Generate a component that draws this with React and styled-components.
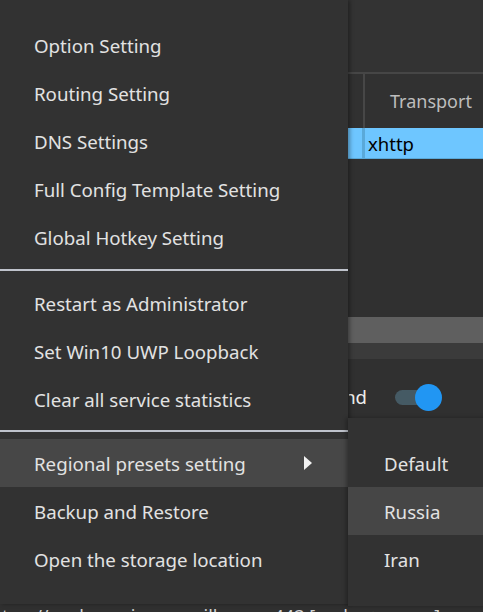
import styled, { createGlobalStyle } from "styled-components";

const GlobalStyle = createGlobalStyle`
  html, body {
    margin: 0;
    padding: 0;
    background: #303030;
  }
  body {
    font-family: "Noto Sans", "Open Sans", sans-serif;
  }
`;

const mainItems = [
    ["Option Setting", "Routing Setting", "DNS Settings", "Full Config Template Setting", "Global Hotkey Setting"],
    ["Restart as Administrator", "Set Win10 UWP Loopback", "Clear all service statistics"],
    ["Regional presets setting", "Backup and Restore", "Open the storage location"],
];

const regions = ["Default", "Russia", "Iran"];

export default () => {
    return <Page>
        <GlobalStyle />

        {/* the window behind the menu */}
        <Toolbar />
        <Header>
            <HeadCell />
            <HeadTitle>Transport</HeadTitle>
        </Header>
        <SelectedRow>
            <RowCell />
            <RowText>xhttp</RowText>
        </SelectedRow>
        <Spacer />
        <GrayBar />
        <Strip />
        <ToggleRow>
            <ToggleLabel><span>Background</span></ToggleLabel>
            <Toggle>
                <Knob />
            </Toggle>
        </ToggleRow>
        <LogLine>tog //push.services.mozilla.com:443 [socks -&gt; proxy]</LogLine>

        {/* context menu */}
        <Menu>
            {mainItems.map((group, gi) => <div key={gi}>
                {gi > 0 && <Separator $gap={gi === 1 ? 8 : 7} />}
                {group.map(label => {
                    const hasSub = label === "Regional presets setting"
                    return <Item key={label} $active={hasSub}>
                        {label}
                        {hasSub && <Arrow />}
                    </Item>
                })}
            </div>)}
        </Menu>

        <SubMenu>
            {regions.map(name => <SubItem key={name} $active={name === "Russia"}>{name}</SubItem>)}
        </SubMenu>
    </Page>
}

const Page = styled.div`
  position: relative;
  width: 483px;
  height: 612px;
  overflow: hidden;
  background: #303030;
  display: flex;
  flex-direction: column;
`;

const Toolbar = styled.div`
  height: 72px;
  flex-shrink: 0;
  background: #333333;
  border-bottom: 2px solid #464646;
`;

const Header = styled.div`
  height: 54px;
  flex-shrink: 0;
  display: flex;
  background: #313131;
`;

const HeadCell = styled.div`
  width: 363px;
  flex-shrink: 0;
  border-right: 2px solid #474747;
`;

const HeadTitle = styled.div`
  flex: 1;
  display: flex;
  align-items: center;
  padding-left: 25px;
  font-size: 18px;
  color: #bdbdbd;
`;

const SelectedRow = styled.div`
  height: 31px;
  flex-shrink: 0;
  display: flex;
  background: #6ec6ff;
  border-bottom: 1px solid #5aa9d9;
  box-sizing: border-box;
`;

const RowCell = styled.div`
  width: 362px;
  flex-shrink: 0;
  border-right: 3px solid #5aa9d9;
`;

const RowText = styled.div`
  display: flex;
  align-items: center;
  padding-left: 3px;
  font-size: 18.5px;
  color: #000000;
`;

const Spacer = styled.div`
  height: 158px;
  flex-shrink: 0;
`;

const GrayBar = styled.div`
  height: 26px;
  flex-shrink: 0;
  background: #5f5f5f;
`;

const Strip = styled.div`
  height: 16px;
  flex-shrink: 0;
  background: #3b3b3b;
`;

const ToggleRow = styled.div`
  height: 76px;
  flex-shrink: 0;
  display: flex;
  align-items: center;
  justify-content: flex-end;
  padding-right: 42px;
  gap: 28px;
  color: #eeeeee;
  font-size: 18.5px;
`;

/* only the tail of the label peeks out from under the menu */
const ToggleLabel = styled.span`
  width: 18px;
  overflow: hidden;
  display: flex;
  justify-content: flex-end;
  white-space: nowrap;
  margin-top: -2px;
`;

const Toggle = styled.div`
  position: relative;
  width: 46px;
  height: 15px;
  border-radius: 8px;
  background: #455a64;
`;

const Knob = styled.div`
  position: absolute;
  right: -1px;
  top: -6px;
  width: 27px;
  height: 27px;
  border-radius: 50%;
  background: #2196f3;
`;

const LogLine = styled.div`
  margin-top: auto;
  margin-bottom: -15px;
  padding-left: 2px;
  font-size: 18px;
  line-height: 22px;
  color: #d0d0d0;
  white-space: nowrap;
`;

const Menu = styled.div`
  position: absolute;
  left: 0;
  top: 0;
  width: 348px;
  box-sizing: border-box;
  padding: 21px 0 21px;
  background: #323232;
  box-shadow: 2px 0 4px rgba(0, 0, 0, 0.35);
  z-index: 2;
`;

const Item = styled.div`
  position: relative;
  height: 48px;
  display: flex;
  align-items: center;
  padding-left: 34px;
  font-size: 18.7px;
  color: #e2e2e2;
  background: ${p => p.$active ? "#474747" : "transparent"};
`;

const Arrow = styled.span`
  position: absolute;
  left: 304px;
  top: 17px;
  width: 0;
  height: 0;
  border-top: 7px solid transparent;
  border-bottom: 7px solid transparent;
  border-left: 8px solid #f2f2f2;
`;

const Separator = styled.div`
  height: 2px;
  margin: ${p => p.$gap}px 0;
  background: #bfc3cc;
`;

const SubMenu = styled.div`
  position: absolute;
  left: 348px;
  top: 418px;
  width: 200px;
  padding: 21px 0 23px;
  background: #323232;
  box-shadow: -2px 0 4px rgba(0, 0, 0, 0.3);
  z-index: 3;
`;

const SubItem = styled.div`
  height: 48px;
  display: flex;
  align-items: center;
  padding-left: 36px;
  font-size: 18.7px;
  color: #e2e2e2;
  background: ${p => p.$active ? "#464646" : "transparent"};
`;
